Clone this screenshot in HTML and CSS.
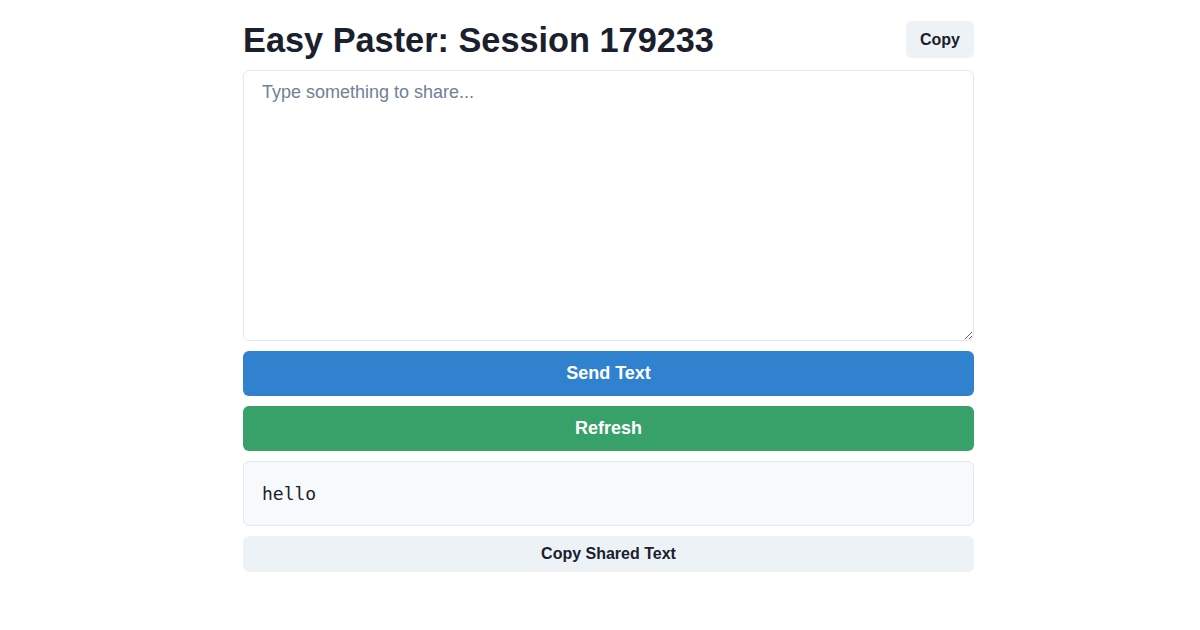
FILE: index.html
```html
<!DOCTYPE html>
<html lang="en">
<head>
<meta charset="utf-8">
<title>Easy Paster</title>
<link rel="stylesheet" href="styles.css">
</head>
<body>
<main class="container">
  <header class="header">
    <h1 class="title">Easy Paster: Session 179233</h1>
    <button class="btn btn-gray btn-copy">Copy</button>
  </header>
  <textarea class="input" placeholder="Type something to share..."></textarea>
  <button class="btn btn-blue btn-big">Send Text</button>
  <button class="btn btn-green btn-big">Refresh</button>
  <div class="shared">hello</div>
  <button class="btn btn-gray btn-wide">Copy Shared Text</button>
</main>
</body>
</html>
```
FILE: styles.css
```css
* { box-sizing: border-box; }
html, body { margin: 0; padding: 0; background: #fff; }
body {
  font-family: "Liberation Sans", Arial, sans-serif;
  color: #1a202c;
  padding-left: 17px;
}
.container {
  width: 731px;
  margin: 0 auto;
  padding-top: 21px;
  display: flex;
  flex-direction: column;
  gap: 10px;
}
.header {
  display: flex;
  align-items: flex-start;
  justify-content: space-between;
  height: 39px;
}
.title {
  margin: 2px 0 0;
  font-size: 34.3px;
  font-weight: 700;
  line-height: 1;
  color: #1a202c;
}
.btn {
  border: none;
  font-family: "Liberation Sans", Arial, sans-serif;
  font-weight: 700;
  border-radius: 6px;
  cursor: pointer;
}
.btn-gray { background: #edf2f7; color: #1a202c; }
.btn-copy {
  height: 37px;
  padding: 1px 14px 0;
  font-size: 16px;
}
.input {
  height: 271px;
  width: 100%;
  border: 1px solid #e2e8f0;
  border-radius: 6px;
  padding: 8px 18px;
  font-family: "Liberation Sans", Arial, sans-serif;
  font-size: 18px;
  line-height: 1.5;
  color: #1a202c;
  resize: vertical;
  display: block;
}
.input::placeholder { color: #718096; }
.btn-big {
  height: 45px;
  width: 100%;
  color: #fff;
  font-size: 18px;
  padding-top: 1px;
}
.btn-blue { background: #3182ce; }
.btn-green { background: #38a169; }
.shared {
  height: 65px;
  background: #f7fafc;
  border: 1px solid #e2e8f0;
  border-radius: 6px;
  padding: 0 18px;
  display: flex;
  align-items: center;
  font-family: "DejaVu Sans Mono", monospace;
  font-size: 18px;
  color: #1a202c;
}
.btn-wide {
  height: 36px;
  width: 100%;
  font-size: 16px;
  padding-top: 1px;
}
```
